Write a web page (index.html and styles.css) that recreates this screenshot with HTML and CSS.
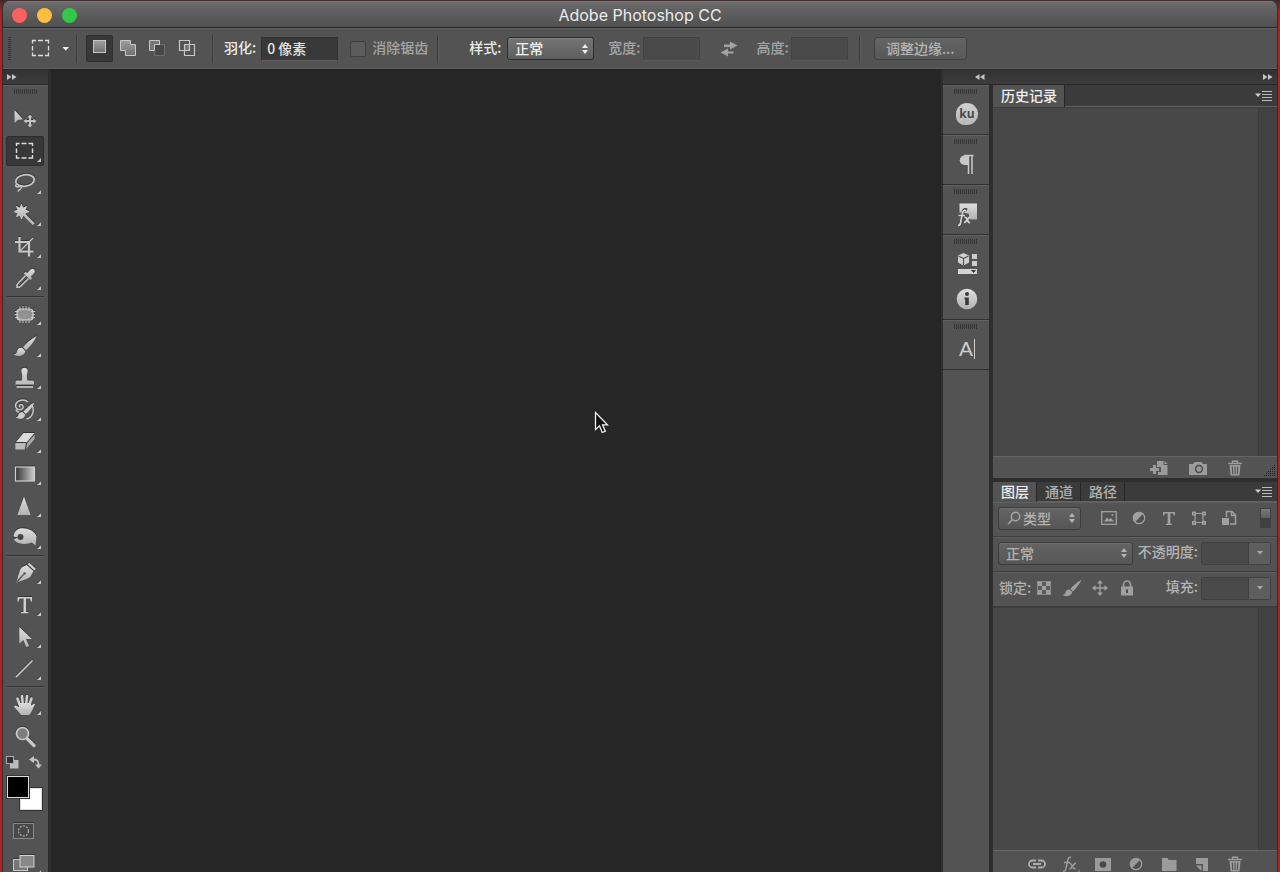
FILE: index.html
```html
<!DOCTYPE html>
<html lang="zh-CN">
<head>
<meta charset="utf-8">
<title>Adobe Photoshop CC</title>
<link rel="stylesheet" href="styles.css">
</head>
<body>
<svg class="defs" aria-hidden="true">
  <defs>
    <linearGradient id="metal" x1="0" y1="0" x2="0" y2="1"><stop offset="0" stop-color="#dedede"/><stop offset="1" stop-color="#b2b2b2"/></linearGradient>
    <linearGradient id="fade" x1="0" y1="0" x2="1" y2="0"><stop offset="0" stop-color="#333"/><stop offset="1" stop-color="#d0d0d0"/></linearGradient>
    <linearGradient id="pane" x1="0" y1="0" x2="0" y2="1"><stop offset="0" stop-color="#a0a0a0"/><stop offset="1" stop-color="#707070"/></linearGradient>
    <symbol id="corner" viewBox="0 0 4 4"><path d="M4 0V4H0z" fill="#c8c8c8"/></symbol>
    <symbol id="updown" viewBox="0 0 6 10"><path d="M3 0l3 4H0zM3 10L0 6h6z"/></symbol>
    <symbol id="menu" viewBox="0 0 18 12"><path d="M0 3.500h6l-3 3.500z" fill="#d0d0d0"/><path d="M7 1.500h10M7 4.500h10M7 7.500h10M7 10.500h10" stroke="#bcbcbc" stroke-width="1.200"/></symbol>
    <symbol id="trash" viewBox="0 0 16 16"><path d="M1 3.500h14M5.500 3V1.200h5V3" fill="none" stroke="currentColor" stroke-width="1.400"/><path d="M2.500 5h11l-1 10.500h-9z" fill="currentColor"/><path d="M5.300 6.500l.4 7.500M8 6.500V14M10.700 6.500l-.4 7.500" stroke="#4c4c4c" stroke-width="1"/></symbol>
    <symbol id="half" viewBox="0 0 16 16"><circle cx="8" cy="8" r="6" fill="currentColor"/><path d="M12.200 3.800A6 6 0 0 1 3.800 12.200z" fill="#505050"/><circle cx="8" cy="8" r="5.700" fill="none" stroke="currentColor" stroke-width="1.200"/></symbol>
    <symbol id="brush" viewBox="0 0 24 22"><path d="M23.500 1C18 4 13 8.500 10 12.300L13 15.200C17 11.500 21.500 6.500 23.500 1z"/><path d="M9.300 13C6.300 12.300 4.400 14.300 4 16.500 3.600 18.300 2.500 19.200.5 19.500 4 22 11.500 21.500 12.300 16z"/></symbol>
  </defs>
</svg>
<div class="window">
  <header class="titlebar">
    <div class="lights">
      <button class="light light-close" aria-label="关闭"></button>
      <button class="light light-min" aria-label="最小化"></button>
      <button class="light light-zoom" aria-label="缩放"></button>
    </div>
    <h1 class="title">Adobe Photoshop CC</h1>
  </header>

  <div class="options">
    <span class="options-grip"></span>
    <button class="preset" aria-label="矩形选框工具">
      <svg width="48" height="28" viewBox="0 0 48 28"><path d="M6.500 8.500V5.500h3.500M12 5.500h5M19 5.500h3.500v3M22.500 11v4.500M22.500 17.500v3H19M17 20.500h-5M10 20.500H6.500v-3M6.500 15.500V11" fill="none" stroke="#ddd" stroke-width="1.300"/><path d="M36.500 12h6.500l-3.200 3.800z" fill="#eee"/></svg>
    </button>
    <span class="divider"></span>
    <div class="modes">
      <button class="mode mode-on" aria-label="新选区"><svg width="27" height="27" viewBox="0 0 27 27"><rect x="7.500" y="5.500" width="12" height="12" fill="url(#pane)" stroke="#c4c4c4"/></svg></button>
      <button class="mode" aria-label="添加到选区"><svg width="27" height="27" viewBox="0 0 27 27"><path d="M5.500 5.500h10v4h5v11h-10v-5h-5z" fill="url(#pane)" stroke="#c8c8c8"/><path d="M10.500 15V9.500H15" fill="none" stroke="#888"/></svg></button>
      <button class="mode" aria-label="从选区减去"><svg width="27" height="27" viewBox="0 0 27 27"><path d="M5.500 5.500h10v4h-5v6h-5z" fill="#777" stroke="#c8c8c8"/><rect x="10.500" y="9.500" width="10" height="11" fill="#484848" stroke="#6e6e6e"/><path d="M10.500 15.500v-6H16" fill="none" stroke="#c8c8c8"/></svg></button>
      <button class="mode" aria-label="与选区交叉"><svg width="27" height="27" viewBox="0 0 27 27"><rect x="11.500" y="9.500" width="5" height="6" fill="#777"/><path d="M6.500 5.500h10v10h-10zM11.500 9.500h10v11h-10z" fill="none" stroke="#c8c8c8" stroke-width="1.200"/></svg></button>
    </div>
    <span class="divider divider-modes"></span>
    <label class="lit" for="feather">羽化:</label>
    <input class="field feather" id="feather" type="text" value="0 像素">
    <input class="check" id="antialias" type="checkbox" disabled>
    <label class="dim check-label" for="antialias">消除锯齿</label>
    <span class="divider divider-check"></span>
    <label class="lit style-label" for="style">样式:</label>
    <span class="picker picker-style"><select id="style"><option>正常</option></select><svg class="updown"><use href="#updown"/></svg></span>
    <label class="dim size-label" for="width">宽度:</label>
    <input class="field field-off" id="width" type="text" disabled>
    <button class="swap-size" aria-label="交换高度和宽度"><svg width="18" height="16" viewBox="0 0 18 16"><path d="M4 3.500h6V.5l7.500 4-7.500 4V6H4zM13.500 12.500H8v3l-7.500-4 7.500-4V10.500h5.500z" fill="#a2a2a2"/></svg></button>
    <label class="dim height-label" for="height">高度:</label>
    <input class="field field-off" id="height" type="text" disabled>
    <span class="divider divider-size"></span>
    <button class="refine">调整边缘...</button>
  </div>

  <main class="work">
    <aside class="toolbar">
      <div class="dock-head"><button class="expand" aria-label="展开工具栏"><svg width="10" height="8" viewBox="0 0 10 8"><path d="M0 1l4.500 3L0 7zM5 1l4.500 3L5 7z"/></svg></button></div>
      <div class="tools">
        <span class="grip"></span>
        <button class="tool" aria-label="移动"><svg viewBox="0 0 38 30"><path d="M8.500 6v13l3.200-3 5.300-.8z" fill="url(#metal)"/><path d="M24 10.500l2.600 3H25v2.500h2.500v-1.600l3 2.600-3 2.600V18H25v2.500h1.600L24 23.500l-2.600-3H23V18h-2.500v1.600l-3-2.600 3-2.600V16H23v-2.500h-1.600z" fill="#c4c4c4"/></svg></button>
        <button class="tool tool-on" aria-label="矩形选框"><svg viewBox="0 0 38 30"><path d="M10.500 10V7.500h3M15.500 7.500h5M22.500 7.500h4V10M26.500 12.500v4.500M26.500 19v3h-4M20.500 22h-5M13.500 22h-3v-3M10.500 17v-4.500" fill="none" stroke="#ddd" stroke-width="1.400"/><use href="#corner" x="31" y="22" width="4" height="4"/></svg></button>
        <button class="tool" aria-label="套索"><svg viewBox="0 0 38 30"><ellipse cx="19" cy="12.500" rx="9.300" ry="5.700" transform="rotate(-8 19 12.500)" fill="none" stroke="#c6c6c6" stroke-width="1.800"/><path d="M11 15.500c-2.500 2-.5 4.500 2 3s3 1.500 1.500 2.500-2 1-2.500 2.500" fill="none" stroke="#c6c6c6" stroke-width="1.500"/><use href="#corner" x="31" y="22" width="4" height="4"/></svg></button>
        <button class="tool" aria-label="魔棒"><svg viewBox="0 0 38 30"><path d="M15.500 4.500l1.300 3.800L20.500 6.500l-1.600 3.600 4.100 1.400-4.100 1.500 1.600 3.500-3.600-1.600-1.400 4.100-1.400-4.100-3.600 1.600 1.600-3.500-4.100-1.500 4.100-1.400-1.600-3.600 3.600 1.800z" fill="url(#metal)" stroke="#ccc"/><path d="M19 15.500l8.800 8.700" stroke="#c0c0c0" stroke-width="2.600"/><use href="#corner" x="31" y="22" width="4" height="4"/></svg></button>
        <button class="tool" aria-label="裁剪"><svg viewBox="0 0 38 30"><path d="M9 10h14v14.500M13.500 5v14.500H27.500" fill="none" stroke="#c8c8c8" stroke-width="2.200"/><path d="M14 19L27 6" stroke="#c8c8c8" stroke-width="1.300"/><use href="#corner" x="31" y="22" width="4" height="4"/></svg></button>
        <button class="tool" aria-label="吸管"><svg viewBox="0 0 38 30"><path d="M19.500 11.500l-7.500 7.700c-1 1-1.300 2.800-1 4 1.300.2 2.800-.2 3.800-1.200l7.700-7.500" fill="none" stroke="#c8c8c8" stroke-width="1.600"/><path d="M17.800 9.500l1.700-1.600 1.700 1.200L24.500 5.600c2.500-2.200 5.700.9 3.600 3.500l-3.300 3.500 1.200 1.700-1.600 1.700z" fill="url(#metal)"/><use href="#corner" x="31" y="22" width="4" height="4"/></svg></button>
        <span class="tool-rule"></span>
        <button class="tool" aria-label="修补"><svg viewBox="0 0 38 30"><rect x="11" y="10" width="16" height="11" rx="3" fill="#919191" stroke="#d0d0d0" stroke-width="1.200"/><path d="M14 7.500V12M17 7v4M20 7v4M23 7.500V12M14 19v5M17 20v4M20 20v4M23 19v5M9 12.500h4M8.500 15.500H12M9 18.500h4M25 12.500h4M26 15.500h3M25 18.500h4" stroke="#cacaca" stroke-width="1"/><use href="#corner" x="31" y="22" width="4" height="4"/></svg></button>
        <button class="tool" aria-label="画笔"><svg viewBox="0 0 38 30"><use href="#brush" x="7" y="4" width="24" height="22" fill="url(#metal)"/><use href="#corner" x="31" y="22" width="4" height="4"/></svg></button>
        <button class="tool" aria-label="仿制图章"><svg viewBox="0 0 38 30"><path d="M15.500 9a3.200 3.200 0 1 1 6 0c-.8 2-1 5 0 8.500H27q1 0 1 1.500v2.500H9.500V19q0-1.500 1-1.500h5.300c.7-3.500.5-6.500-.3-8.500zM10.500 23h16.500v2H10.500z" fill="url(#metal)"/><use href="#corner" x="31" y="22" width="4" height="4"/></svg></button>
        <button class="tool" aria-label="历史记录画笔"><svg viewBox="0 0 38 30"><path d="M25.500 9.500c3.500 5 1.500 13-5 14.500M22 7C18 3.500 11 5 9.700 9.500c-.8 4 3.300 6.500 6.300 4.300 2.200-1.800.8-5-1.500-4.200-1.500.6-1.300 2.200 0 2.400M10 14.500c.5 1.500 1.500 2.500 3 2.500" fill="none" stroke="#c8c8c8" stroke-width="1.500"/><use href="#brush" x="9" y="6" width="20" height="19" fill="#ccc"/><use href="#corner" x="31" y="22" width="4" height="4"/></svg></button>
        <button class="tool" aria-label="橡皮擦"><svg viewBox="0 0 38 30"><path d="M17.500 6h11l-7.500 9h-11z" fill="#dadada"/><path d="M9.300 16H20l-1.500 6.500H9.300z" fill="#bababa"/><path d="M21.300 16L28.700 7.500V12L20 22z" fill="#a8a8a8"/><use href="#corner" x="31" y="22" width="4" height="4"/></svg></button>
        <button class="tool" aria-label="渐变"><svg viewBox="0 0 38 30"><rect x="9.500" y="8" width="19" height="14" fill="url(#fade)" stroke="#cecece" stroke-width="1.200"/><use href="#corner" x="31" y="22" width="4" height="4"/></svg></button>
        <button class="tool" aria-label="锐化"><svg viewBox="0 0 38 30"><path d="M18 5.500L24.700 24H11.300z" fill="url(#metal)"/><use href="#corner" x="31" y="22" width="4" height="4"/></svg></button>
        <button class="tool" aria-label="加深"><svg viewBox="0 0 38 30"><path d="M7.500 13C8.500 7.500 12.500 5 17 5.300c5 .2 12 2.700 13.500 8.200l-1 9-3.500-3c-5 2-12 2-16-.7l-2.500-2.500 2.500-.5z" fill="url(#metal)"/><circle cx="14.500" cy="14" r="3" fill="#454545"/><path d="M7 14.500h6" stroke="#454545"/><use href="#corner" x="31" y="22" width="4" height="4"/></svg></button>
        <span class="tool-rule"></span>
        <button class="tool" aria-label="钢笔"><svg viewBox="0 0 38 30"><path d="M20.500 7l7 6-3 5.500c-2.500 2.500-9 4-14.500 6.500C12 19.500 13 13 15.500 9.500z" fill="url(#metal)"/><path d="M22.500 5.500l6.500 6" stroke="#d4d4d4" stroke-width="2.300"/><path d="M10.500 24.500l7-8" stroke="#555" stroke-width="1.300"/><circle cx="18.500" cy="15.500" r="1.300" fill="#555"/><use href="#corner" x="31" y="22" width="4" height="4"/></svg></button>
        <button class="tool" aria-label="横排文字"><svg viewBox="0 0 38 30"><path d="M11.500 7H26v4.500h-1L24 8.500h-4V21.700l2.500.5v1h-7.500v-1l2.500-.5V8.500h-4l-1 3h-1z" fill="#d0d0d0"/><use href="#corner" x="31" y="22" width="4" height="4"/></svg></button>
        <button class="tool" aria-label="路径选择"><svg viewBox="0 0 38 30"><path d="M13.300 5v16.500l4-3.600 3 7 2.800-1.200-3-6.800H26z" fill="url(#metal)"/><use href="#corner" x="31" y="22" width="4" height="4"/></svg></button>
        <button class="tool" aria-label="直线"><svg viewBox="0 0 38 30"><path d="M10 23L26.500 6.500" stroke="#d4d4d4" stroke-width="1.500"/><use href="#corner" x="31" y="22" width="4" height="4"/></svg></button>
        <span class="tool-rule"></span>
        <button class="tool" aria-label="抓手"><svg viewBox="0 0 38 30"><path d="M13.500 15L11.500 9.500M16.700 14L16 7M20.300 14L21 7M23.500 15l2-5.500" stroke="#cfcfcf" stroke-width="2.500" stroke-linecap="round"/><path d="M12.500 14h12l1 2.500 2-1.800c1-.5 1.800.5 1.200 1.300-2 3-3.200 9-6.200 10h-7c-1.500-1-3-4-7-7.500-1-1.500.5-2.500 2-1.800l2.500 1.600z" fill="url(#metal)"/><use href="#corner" x="31" y="22" width="4" height="4"/></svg></button>
        <button class="tool" aria-label="缩放"><svg viewBox="0 0 38 30"><path d="M21 17.500l7 7" stroke="#c9c9c9" stroke-width="3.200" stroke-linecap="round"/><circle cx="16.500" cy="12.500" r="6" fill="#7d7d7d" stroke="#c9c9c9" stroke-width="1.700"/></svg></button>
        <div class="mini">
          <button class="mini-button" aria-label="默认颜色"><svg width="14" height="14" viewBox="0 0 14 14"><rect x="4" y="5" width="8.500" height="8.500" fill="#bbb"/><rect x=".5" y="1.500" width="7" height="7" fill="#333" stroke="#aaa"/></svg></button>
          <button class="mini-button" aria-label="切换颜色"><svg width="14" height="14" viewBox="0 0 14 14"><path d="M4.500 4.500c4 0 5 1.500 5 5.500" fill="none" stroke="#c4c4c4" stroke-width="1.800"/><path d="M0 4.500L5 1v7zM9.500 13.500L6 9.500h7z" fill="#c4c4c4"/></svg></button>
        </div>
        <div class="swatches">
          <button class="swatch swatch-back" aria-label="背景色"></button>
          <button class="swatch swatch-front" aria-label="前景色"></button>
        </div>
        <button class="tool tool-mask" aria-label="快速蒙版"><svg viewBox="0 0 38 30"><rect x="7.500" y="7.500" width="20" height="15" fill="#484848" stroke="#898989"/><circle cx="17.500" cy="15" r="5" fill="none" stroke="#aaa" stroke-width="1.200" stroke-dasharray="2 1.200"/></svg></button>
        <button class="tool" aria-label="屏幕模式"><svg viewBox="0 0 38 30"><rect x="7.500" y="11.500" width="14" height="11" fill="#777" stroke="#c8c8c8"/><rect x="14" y="7.500" width="14" height="11.500" fill="#888" stroke="#d4d4d4"/><use href="#corner" x="31" y="22" width="4" height="4"/></svg></button>
      </div>
    </aside>

    <section class="canvas" aria-label="画布">
      <svg class="pointer" width="15" height="24" viewBox="0 0 15 24"><path d="M1.500 1.500v17l4-3.700 2.800 6.700 3-1.300-2.800-6.400h5z" fill="#111" stroke="#f2f2f2" stroke-width="1.300"/></svg>
    </section>

    <aside class="right">
      <div class="dock-head dock-head-right">
        <button class="expand" aria-label="展开面板"><svg width="10" height="8" viewBox="0 0 10 8"><path d="M4.500 1L0 4l4.500 3zM9.500 1L5 4l4.500 3z"/></svg></button>
        <button class="expand" aria-label="折叠面板"><svg width="10" height="8" viewBox="0 0 10 8"><path d="M0 1l4.500 3L0 7zM5 1l4.500 3L5 7z"/></svg></button>
      </div>
      <div class="docks">
        <nav class="strip">
          <div class="strip-group"><span class="grip"></span>
            <button class="strip-button ku" aria-label="Kuler"><span class="ku-badge">ku</span></button></div>
          <div class="strip-group"><span class="grip"></span>
            <button class="strip-button" aria-label="段落"><svg width="24" height="26" viewBox="0 0 24 26"><path d="M13 4.500H9.500a4.700 4.700 0 0 0 0 9.500H13z" fill="#c8c8c8"/><path d="M9 4.500h9.500M13.500 4v19M17 4v19" fill="none" stroke="#c8c8c8" stroke-width="1.500"/></svg></button></div>
          <div class="strip-group"><span class="grip"></span>
            <button class="strip-button" aria-label="样式"><svg width="24" height="26" viewBox="0 0 24 26"><path d="M4.500 2.500H22v16h-6.500l-2-6-9-1z" fill="url(#metal)"/><path d="M12 9c-3-1.500-4 1-4.500 4L5.500 23q-.5 2-2.500 2M3.500 14.500h7" fill="none" stroke="#3f3f3f" stroke-width="3"/><path d="M11 9.500c-2.500-1-3.300 1-3.800 4L5.500 22q-.5 2.500-2.500 2.500M3.500 14.500H10M9.500 16.500c3-1.500 2.500 6 5.500 5M15.500 15.800c-2 0-4.500 6-6.500 5.700" fill="none" stroke="#d4d4d4" stroke-width="1.700"/></svg></button></div>
          <div class="strip-group"><span class="grip"></span>
            <button class="strip-button" aria-label="属性"><svg width="24" height="26" viewBox="0 0 24 26"><path d="M8.500 2l5.500 2.500v7l-5.500 3-5.500-3v-7z" fill="#d0d0d0"/><path d="M3.500 5l5 2.500 5-2.500M8.500 7.500V14" stroke="#555" fill="none" stroke-width="1.200"/><path d="M17 3h5v5h-5zM17 10h5v5h-5z" fill="#ccc"/><path d="M3 18h19v5H3z" fill="#d4d4d4"/><path d="M16 19h5l-2.500 3z" fill="#333"/></svg></button>
            <button class="strip-button" aria-label="信息"><svg width="24" height="26" viewBox="0 0 24 26"><circle cx="12" cy="13" r="10.300" fill="url(#metal)"/><circle cx="12" cy="8" r="2" fill="#3a3a3a"/><path d="M9.500 11.500h4.300V19H10.200v-5.500h-.7z" fill="#3a3a3a"/></svg></button></div>
          <div class="strip-group"><span class="grip"></span>
            <button class="strip-button char" aria-label="字符"><span class="char-a">A</span><span class="char-bar"></span></button></div>
        </nav>

        <div class="panels">
          <section class="panel panel-history">
            <div class="tabs"><button class="tab tab-on">历史记录</button><button class="panel-menu" aria-label="面板菜单"><svg width="18" height="12"><use href="#menu"/></svg></button></div>
            <div class="list"><div class="gutter"></div></div>
            <div class="foot foot-history">
              <button class="foot-button" aria-label="从当前状态创建新文档"><svg width="20" height="16" viewBox="0 0 20 16"><path d="M8 1h6.500v4H18.500v10H9V12h3V7H8z" fill="currentColor"/><path d="M15.500 1l3 3h-3z" fill="currentColor"/><path d="M1 9.500h9M5.500 5v9" stroke="currentColor" stroke-width="3"/></svg></button>
              <button class="foot-button" aria-label="创建新快照"><svg width="20" height="16" viewBox="0 0 20 16"><path d="M1 4h4l1.500-2h7L15 4h4v11H1z" fill="currentColor"/><circle cx="11" cy="9" r="3.400" fill="#999" stroke="#4a4a4a" stroke-width="1.500"/></svg></button>
              <button class="foot-button" aria-label="删除"><svg width="16" height="16"><use href="#trash"/></svg></button>
              <span class="resize"><svg width="12" height="12" viewBox="0 0 12 12"><path d="M10 1.500h2M8 3.500h4M6 5.500h6M4 7.500h8M2 9.500h10M0 11.500h12" stroke="#222" stroke-width="1" stroke-dasharray="1 1"/></svg></span>
            </div>
          </section>

          <section class="panel panel-layers">
            <div class="tabs"><button class="tab tab-on">图层</button><button class="tab">通道</button><button class="tab">路径</button><button class="panel-menu" aria-label="面板菜单"><svg width="18" height="12"><use href="#menu"/></svg></button></div>
            <div class="row">
              <span class="picker picker-kind"><svg class="lens" width="14" height="14" viewBox="0 0 14 14"><circle cx="8.500" cy="5.500" r="4.200" fill="none" stroke="#a5a5a5" stroke-width="1.400"/><path d="M5.500 8.500L1 13" stroke="#a5a5a5" stroke-width="1.600"/></svg><select aria-label="滤镜类型" disabled><option>类型</option></select><svg class="updown"><use href="#updown"/></svg></span>
              <div class="filters">
                <button class="icon-button" aria-label="像素图层"><svg width="18" height="16" viewBox="0 0 18 16"><rect x="1.700" y="1.700" width="14.600" height="12.600" fill="none" stroke="currentColor" stroke-width="1.300"/><path d="M4 11.500l3-4 2 2 2-1.500 3 3.500z" fill="currentColor"/><circle cx="12.500" cy="5" r="1" fill="currentColor"/></svg></button>
                <button class="icon-button" aria-label="调整图层"><svg width="18" height="16"><use href="#half"/></svg></button>
                <button class="icon-button" aria-label="文字图层"><svg width="18" height="16" viewBox="0 0 18 16"><path d="M3 2h12v3.500h-1L13 3.500h-2.700v10l1.700.5v1H6v-1l1.700-.5v-10H5L4 5.500H3z" fill="currentColor"/></svg></button>
                <button class="icon-button" aria-label="形状图层"><svg width="18" height="16" viewBox="0 0 18 16"><path d="M4.500 3.500h9q-1.500 4.500 0 9h-9q1.500-4.500 0-9z" fill="none" stroke="currentColor" stroke-width="1.200"/><path d="M2 1.500h4v4H2zM12 1.500h4v4h-4zM2 11h4v4H2zM12 11h4v4h-4z" fill="currentColor"/><path d="M3.500 3h1v1h-1zM13.500 3h1v1h-1zM3.500 12.500h1v1h-1zM13.500 12.500h1v1h-1z" fill="#4c4c4c"/></svg></button>
                <button class="icon-button" aria-label="智能对象"><svg width="18" height="16" viewBox="0 0 18 16"><path d="M6.500 7V1.500H12l3.500 3.500v9H10M11.500 1.500v4h4" fill="none" stroke="currentColor" stroke-width="1.500"/><path d="M2 8h7v7H2z" fill="currentColor"/></svg></button>
              </div>
              <button class="toggle" aria-label="打开或关闭图层过滤"><span class="toggle-knob"></span></button>
            </div>
            <div class="row">
              <span class="picker picker-blend"><select aria-label="混合模式" disabled><option>正常</option></select><svg class="updown"><use href="#updown"/></svg></span>
              <label class="muted amount-label" for="opacity">不透明度:</label>
              <span class="amount"><input id="opacity" type="text" disabled><button aria-label="不透明度滑块"><svg width="8" height="4" viewBox="0 0 8 4"><path d="M1 0h6L4 3.500z" fill="#aaa"/></svg></button></span>
            </div>
            <div class="row">
              <span class="muted lock-label">锁定:</span>
              <div class="locks">
                <button class="icon-button" aria-label="锁定透明像素"><svg width="18" height="16" viewBox="0 0 18 16"><rect x="2.500" y="1.500" width="13" height="13" fill="#5c5c5c" stroke="#8f8f8f"/><path d="M3 2h4v4H3zM11 2h4v4h-4zM7 6h4v4H7zM3 10h4v4H3zM11 10h4v4h-4z" fill="#a0a0a0"/></svg></button>
                <button class="icon-button" aria-label="锁定图像像素"><svg width="20" height="18"><use href="#brush" fill="currentColor"/></svg></button>
                <button class="icon-button" aria-label="锁定位置"><svg width="18" height="18" viewBox="0 0 18 18"><path d="M9 3v12M3 9h12" stroke="currentColor" stroke-width="1.300"/><path d="M9 1l3 3.500H6zM9 17l3-3.500H6zM1 9l3.500-3v6zM17 9l-3.500-3v6z" fill="currentColor"/></svg></button>
                <button class="icon-button" aria-label="锁定全部"><svg width="18" height="18" viewBox="0 0 18 18"><path d="M5.500 8V5.500a3.500 3.500 0 0 1 7 0V8" fill="none" stroke="currentColor" stroke-width="1.600"/><path d="M3 7.500h12v9H3z" fill="currentColor"/><path d="M8 10.500h2v3.500H8z" fill="#4a4a4a"/></svg></button>
              </div>
              <label class="muted amount-label" for="fill">填充:</label>
              <span class="amount"><input id="fill" type="text" disabled><button aria-label="填充滑块"><svg width="8" height="4" viewBox="0 0 8 4"><path d="M1 0h6L4 3.500z" fill="#aaa"/></svg></button></span>
            </div>
            <div class="list"><div class="gutter"></div></div>
            <div class="foot foot-layers">
              <button class="foot-button" aria-label="链接图层"><svg width="20" height="16" viewBox="0 0 20 16"><path d="M9 4.500H5.500a3.500 3.500 0 0 0 0 7H9M11 4.500h3.500a3.500 3.500 0 0 1 0 7H11M6 8h8" fill="none" stroke="#adadad" stroke-width="1.800"/></svg></button>
              <button class="foot-button" aria-label="图层样式"><svg width="20" height="16" viewBox="0 0 20 16"><path d="M11 1.500C8.500.5 8 3 7.500 5.500L6 12.500Q5.500 15.500 3 15M4 6.500h6M9.500 7.500c3-1 2.500 6.500 6 5M16 7c-2 0-4.500 6-6.500 6" fill="none" stroke="currentColor" stroke-width="1.500"/><path d="M20 13v3h-3z" fill="#777"/></svg></button>
              <button class="foot-button" aria-label="图层蒙版"><svg width="20" height="16" viewBox="0 0 20 16"><path d="M2 2h16v13H2z" fill="currentColor"/><circle cx="10" cy="8.500" r="3.300" fill="#494949"/></svg></button>
              <button class="foot-button" aria-label="调整图层"><svg width="20" height="16"><use href="#half"/></svg></button>
              <button class="foot-button" aria-label="新建组"><svg width="20" height="16" viewBox="0 0 20 16"><path d="M3 2h5.500l1 2H17.500v11H3z" fill="currentColor"/></svg></button>
              <button class="foot-button" aria-label="新建图层"><svg width="20" height="16" viewBox="0 0 20 16"><path d="M4 2h12v13h-5V8H4z" fill="currentColor"/><path d="M4 9.500h5.500V15z" fill="currentColor"/></svg></button>
              <button class="foot-button" aria-label="删除图层"><svg width="20" height="16"><use href="#trash"/></svg></button>
            </div>
          </section>
        </div>
      </div>
    </aside>
  </main>
</div>
</body>
</html>
```
FILE: styles.css
```css
* { box-sizing: border-box; }

body {
  margin: 0;
  height: 100vh;
  overflow: hidden;
  display: flex;
  padding: 1px 2px 0;
  background: linear-gradient(#3a2c2c, #b32023 12px, #b32023);
  color: #e4e4e4;
  font: 500 14px/20px "Noto Sans CJK SC", sans-serif;
}

button, input, select {
  margin: 0;
  padding: 0;
  border: 0;
  background: none;
  color: inherit;
  font: inherit;
}

svg { display: block; flex: none; }
.defs { position: absolute; width: 0; height: 0; }

.window {
  flex: 1;
  min-width: 0;
  display: flex;
  flex-direction: column;
  overflow: hidden;
  border: 0 solid #2e2e2e;
  border-width: 0 1px;
  border-radius: 7px 7px 0 0;
  background: #262626;
}

.titlebar {
  flex: none;
  display: grid;
  grid-template-columns: 1fr auto 1fr;
  align-items: center;
  height: 27px;
  padding: 1px 9px 0;
  border-top: 1px solid #7c7c7c;
  border-bottom: 1px solid #262626;
  background: linear-gradient(#6a6a6a, #505050);
}
.lights { display: flex; gap: 10px; }
.light { width: 15px; height: 15px; border-radius: 50%; }
.light-close { background: #fc615d; }
.light-min { background: #fdbd41; }
.light-zoom { background: #34c84a; }
.title {
  margin: 0;
  color: #ececec;
  font: 400 16px/20px Inter, sans-serif;
}

.options {
  flex: none;
  display: flex;
  align-items: center;
  height: 41px;
  border-top: 1px solid #616161;
  border-bottom: 1px solid #606060;
  background: #535353;
  white-space: nowrap;
}
.options-grip {
  width: 3px;
  height: 24px;
  margin: 0 15px 0 5px;
  background: repeating-linear-gradient(#333 0 1px, transparent 1px 2px);
}
.divider {
  flex: none;
  width: 2px;
  height: 28px;
  margin: 0 8px 0 2px;
  border-left: 1px solid #3b3b3b;
  border-right: 1px solid #5c5c5c;
}
.divider-modes { margin: 0 10px 0 12px; }
.divider-check { margin: 0 30px 0 9px; }
.divider-size { margin: 0 13px 0 11px; }
.modes { display: flex; gap: 2px; }
.mode { width: 27px; height: 27px; border-radius: 3px; }
.mode-on { background: #383838; box-shadow: inset 0 0 0 1px #303030; }
.lit { padding-bottom: 4px; color: #ececec; }
.dim { padding-bottom: 4px; color: #a6a6a6; }
.muted { padding-bottom: 4px; color: #b4b4b4; }
.field {
  width: 57px;
  height: 24px;
  padding: 0 5px 2px;
  border: 1px solid #303030;
  border-bottom-color: #606060;
  background: #393939;
}
.field-off { margin-left: 2px; border-color: #404040 #444 #5a5a5a; background: #4a4a4a; }
.feather { width: 77px; margin: 0 12px 0 5px; }
.check {
  appearance: none;
  width: 16px;
  height: 16px;
  margin-right: 6px;
  border: 1px solid #3f3f3f;
  border-radius: 2px;
  background: #5c5c5c;
}
.style-label { margin-right: 6px; }
.size-label { margin-left: 14px; }
.swap-size { margin: 0 19px 0 20px; }

.picker {
  position: relative;
  flex: none;
  display: flex;
  align-items: center;
  height: 23px;
  border: 1px solid #3c3c3c;
  border-radius: 3px;
  background: linear-gradient(#646464, #565656);
  box-shadow: inset 0 1px #6e6e6e;
  color: #b2b2b2;
}
.picker select { appearance: none; flex: 1; min-width: 0; height: 100%; padding: 0 0 3px 7px; opacity: 1; }
.updown { position: absolute; right: 5px; width: 6px; height: 10px; fill: currentColor; pointer-events: none; }
.picker-style { width: 87px; border-color: #2c2c2c; background: linear-gradient(#757575, #5e5e5e); box-shadow: inset 0 1px #858585; color: #f0f0f0; }
.refine {
  width: 93px;
  height: 23px;
  padding-bottom: 2px;
  border: 1px solid #414141;
  border-radius: 3px;
  background: linear-gradient(#646464, #585858);
  color: #b4b4b4;
}

.work { flex: 1; display: flex; min-height: 0; }

.dock-head {
  flex: none;
  display: flex;
  align-items: center;
  height: 15px;
  padding-left: 4px;
  border-bottom: 1px solid #262626;
  background: linear-gradient(#323232, #3c3c3c);
}
.expand svg { fill: #c4c4c4; }

.toolbar {
  flex: none;
  width: 48px;
  display: flex;
  flex-direction: column;
  margin-top: 1px;
  border-right: 3px solid #2e2e2e;
}
.tools {
  flex: 1;
  display: flex;
  flex-direction: column;
  min-height: 0;
  padding: 3px;
  border-top: 1px solid #626262;
  background: #535353;
}
.grip {
  flex: none;
  align-self: center;
  width: 24px;
  height: 5px;
  background: repeating-linear-gradient(90deg, #353535 0 1px, #535353 1px 2px);
}
.tools .grip { margin-bottom: 10px; }
.tool { flex: none; width: 38px; height: 30px; margin-bottom: 2px; border-radius: 3px; }
.tool svg { width: 38px; height: 30px; filter: drop-shadow(0 -1px #353535); }
.tool-on { background: #383838; box-shadow: inset 0 0 0 1px #2c2c2c; }
.tool-rule { flex: none; height: 2px; margin: 0 1px 1px; border-top: 1px solid #333; border-bottom: 1px solid #5e5e5e; }
.mini { flex: none; display: flex; justify-content: space-between; height: 22px; padding: 2px 2px 0 0; }
.mini-button { width: 14px; height: 14px; }
.swatches { flex: none; display: grid; width: 37px; height: 36px; }
.swatch { grid-area: 1 / 1; width: 24px; height: 24px; border: 1px solid #333; box-shadow: inset 0 0 0 1px #ddd; }
.swatch-front { background: #000; }
.swatch-back { justify-self: end; align-self: end; background: #fff; }
.tool-mask { margin-top: 5px; }

.canvas {
  position: relative;
  flex: 1;
  min-width: 0;
  border-top: 1px solid #1f1f1f;
  background: #262626;
}
.pointer { position: absolute; left: 543px; top: 341px; }

.right {
  flex: none;
  width: 336px;
  display: flex;
  flex-direction: column;
  margin-top: 1px;
  border-left: 2px solid #303030;
  background: #2e2e2e;
}
.dock-head-right { justify-content: space-between; padding: 0 4px 0 32px; }
.docks { flex: 1; display: flex; gap: 4px; min-height: 0; }

.strip { flex: none; width: 46px; background: #535353; }
.strip-group {
  display: flex;
  flex-direction: column;
  align-items: center;
  padding: 3px 0;
  border-top: 1px solid #626262;
  border-bottom: 1px solid #303030;
}
.strip-group .grip { margin-bottom: 2px; }
.strip-button { width: 44px; height: 35px; display: flex; align-items: center; justify-content: center; padding-left: 2px; }
.ku-badge {
  width: 22px;
  height: 22px;
  border-radius: 50% 50% 50% 40%;
  background: linear-gradient(#d0d0d0, #b8b8b8);
  color: #4a4a4a;
  font: 700 12px/21px "Open Sans", sans-serif;
}
.char { gap: 1px; color: #ccc; }
.char-a { font: 500 21px/24px "Liberation Sans", sans-serif; }
.char-bar { width: 1px; height: 20px; background: #ccc; }

.panels { flex: 1; display: flex; flex-direction: column; gap: 4px; min-width: 0; }
.panel { display: flex; flex-direction: column; min-height: 0; background: #535353; }
.panel-history { flex: 393 1 0; }
.panel-layers { flex: 390 1 0; }

.tabs {
  flex: none;
  display: flex;
  height: 22px;
  border-bottom: 1px solid #626262;
  background: #3b3b3b;
}
.panel-layers .tabs { height: 20px; }
.tab { padding: 0 7px 2px 8px; border-right: 1px solid #272727; color: #b0b0b0; line-height: 18px; }
.tab-on { margin-bottom: -1px; background: #535353; color: #f0f0f0; }
.panel-menu { margin: 0 4px 0 auto; }

.list { flex: 1; display: flex; justify-content: flex-end; min-height: 0; border-top: 1px solid #3e3e3e; background: #484848; }
.gutter { width: 19px; border-left: 1px solid #3c3c3c; background: #424242; }

.foot {
  flex: none;
  display: flex;
  align-items: center;
  height: 22px;
  border-top: 1px solid #666;
  color: #9b9b9b;
}
.foot-history { justify-content: flex-end; gap: 19px; }
.foot-layers { justify-content: space-between; padding: 4px 32px 0 34px; }
.resize { align-self: flex-end; margin-left: 2px; padding: 0 1px 2px 0; }

.row {
  flex: none;
  display: flex;
  align-items: center;
  height: 35px;
  padding: 0 6px 2px 5px;
  border-bottom: 1px solid #3c3c3c;
  box-shadow: inset 0 1px #606060;
}
.picker-kind { width: 83px; padding-left: 8px; }
.picker-kind select { padding-left: 2px; }
.picker-blend { width: 135px; }
.filters { flex: 1; display: flex; justify-content: center; gap: 12px; padding-right: 3px; }
.icon-button { color: #a0a0a0; }
.toggle { width: 11px; height: 20px; padding: 1px; background: #404040; }
.toggle-knob { display: block; height: 9px; margin-bottom: 9px; background: linear-gradient(#7a7a7a, #5e5e5e); }
.lock-label { padding: 0 0 2px 1px; }
.locks { display: flex; align-items: center; gap: 9px; margin-left: 4px; }
.amount-label { margin-left: auto; }
.amount { flex: none; display: flex; width: 70px; height: 23px; margin-left: 3px; border: 1px solid #404040; border-radius: 2px; }
.amount input { flex: 1; min-width: 0; background: #4a4a4a; }
.amount button { width: 22px; display: flex; align-items: center; justify-content: center; border-left: 1px solid #404040; background: #5e5e5e; }
```
